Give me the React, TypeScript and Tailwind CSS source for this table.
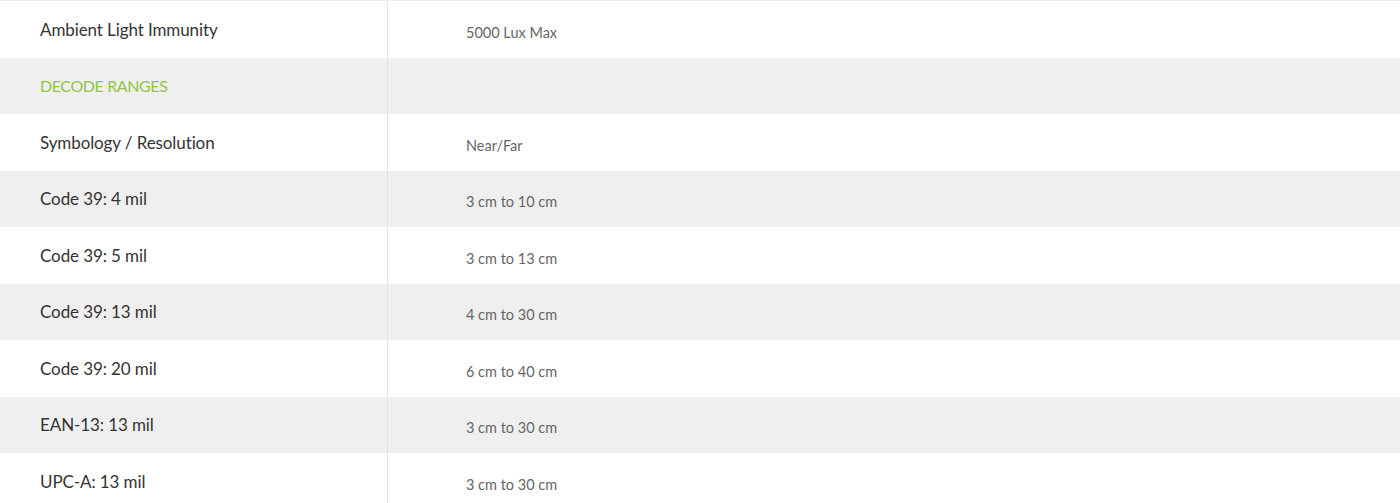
const rows: { label: string; value?: string; section?: boolean }[] = [
  { label: 'Ambient Light Immunity', value: '5000 Lux Max' },
  { label: 'DECODE RANGES', section: true },
  { label: 'Symbology / Resolution', value: 'Near/Far' },
  { label: 'Code 39: 4 mil', value: '3 cm to 10 cm' },
  { label: 'Code 39: 5 mil', value: '3 cm to 13 cm' },
  { label: 'Code 39: 13 mil', value: '4 cm to 30 cm' },
  { label: 'Code 39: 20 mil', value: '6 cm to 40 cm' },
  { label: 'EAN-13: 13 mil', value: '3 cm to 30 cm' },
  { label: 'UPC-A: 13 mil', value: '3 cm to 30 cm' },
]

export default function App() {
  return (
    <div className="w-[1400px] h-[503px] overflow-hidden bg-white border-t border-[#ececec] font-['Lato','Open_Sans',sans-serif]">
      {rows.map((row, i) => (
        <div
          key={row.label}
          className={`flex h-[56.5px] ${i % 2 === 1 ? 'bg-[#efefef]' : 'bg-white'}`}
        >
          <div className="w-[388px] shrink-0 flex items-center pl-10 border-r border-[#e4e4e4]">
            <span
              className={
                row.section
                  ? 'text-[16px] tracking-[-0.4px] text-[#8dc63f]'
                  : 'text-[17px] tracking-[-0.1px] text-[#333333]'
              }
            >
              {row.label}
            </span>
          </div>
          <div className="flex-1 flex items-center pl-[78px] pt-[7px]">
            <span className="text-[14.5px] text-[#666666]">{row.value}</span>
          </div>
        </div>
      ))}
    </div>
  )
}
